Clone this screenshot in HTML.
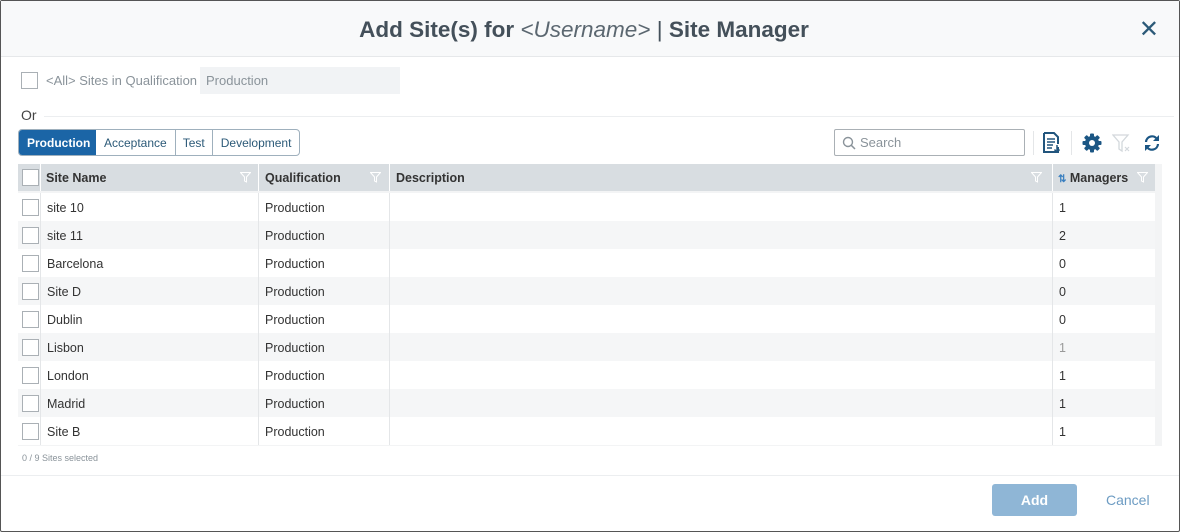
<!DOCTYPE html><html><head><style>
*{box-sizing:border-box;margin:0;padding:0}
body{width:1180px;height:532px;font-family:"Liberation Sans",sans-serif;background:#fff;position:relative;overflow:hidden;color:#333}
.frame{position:absolute;left:0;top:0;width:1180px;height:532px;border:1px solid #555;border-radius:2px}
.hdr{position:absolute;left:1px;top:1px;width:1178px;height:56px;background:#f8f9fa;border-bottom:1px solid #e6e8ea}
.title{position:absolute;left:-6px;width:100%;top:16px;text-align:center;font-size:22.5px;color:#44505a;font-weight:bold}
.title i{font-weight:normal;color:#5b6770}
.x{position:absolute;right:20px;top:14px;font-size:24px;color:#2c5a78}
.abs{position:absolute}
.cb{position:absolute;width:17px;height:17px;border:1px solid #aab0b5;background:#fff}
.row{position:absolute;left:18px;width:1137px;height:28px}
.row .c{position:absolute;top:0;height:28px;line-height:30px;font-size:12.5px;border-left:1px solid #e4e6e8;padding-left:6px}
.f{position:absolute;top:8px}
</style></head><body>
<div class="frame"></div>
<div class="hdr"><div class="title">Add Site(s) for <i>&lt;Username&gt;</i> <span style="font-weight:normal">|</span> Site Manager</div><div class="x">✕</div></div>
<div class="cb" style="left:21px;top:72px"></div>
<div class="abs" style="left:46px;top:73px;font-size:13px;color:#8a939a">&lt;All&gt; Sites in Qualification</div>
<div class="abs" style="left:200px;top:67px;width:200px;height:27px;background:#f1f3f5;font-size:13px;color:#8a939a;padding:6px 6px">Production</div>
<div class="abs" style="left:21px;top:107px;font-size:14px;color:#444">Or</div>
<div class="abs" style="left:44px;top:116px;width:1130px;height:1px;background:#eceef0"></div>
<div class="abs" style="left:18px;top:129px;height:27px;border:1px solid #9fb0bd;border-radius:4px;display:flex;font-size:12px;overflow:hidden">
<div style="background:#1b65a6;color:#fff;font-weight:bold;padding:6px 8px 0 8px;width:77px">Production</div>
<div style="color:#2c5a78;padding:6px 8px 0;border-right:1px solid #9fb0bd">Acceptance</div>
<div style="color:#2c5a78;padding:6px 7px 0;border-right:1px solid #9fb0bd">Test</div>
<div style="color:#2c5a78;padding:6px 8px 0">Development</div></div>
<div class="abs" style="left:834px;top:129px;width:191px;height:27px;border:1px solid #aab0b5;border-radius:2px;font-size:13px;color:#8a939a;padding:5px 0 0 25px">Search
<svg style="position:absolute;left:7px;top:6px" width="14" height="14" viewBox="0 0 14 14"><circle cx="6" cy="6" r="4.5" fill="none" stroke="#8a939a" stroke-width="1.4"/><path d="M9.3 9.3L13 13" stroke="#8a939a" stroke-width="1.5"/></svg></div>
<div class="abs" style="left:1033px;top:131px;width:1px;height:24px;background:#e4e6e8"></div>
<svg class="abs" style="left:1043px;top:132px" width="18" height="21" viewBox="0 0 18 21"><path d="M1 1h10l4 4v7M15 15v5H1V1" fill="none" stroke="#22557d" stroke-width="2"/><path d="M4 7h8M4 10h8M4 13h6M4 16h5" stroke="#22557d" stroke-width="1.5"/><path d="M14 13v7M11.5 17.5l2.5 3 2.5-3" stroke="#22557d" stroke-width="1.5" fill="none"/></svg>
<div class="abs" style="left:1071px;top:131px;width:1px;height:24px;background:#e4e6e8"></div>
<svg class="abs" style="left:1082px;top:133px" width="20" height="20" viewBox="0 0 20 20"><g fill="#1b5684"><circle cx="10" cy="10" r="7"/><rect x="8" y="0.5" width="4" height="19" rx="1"/><rect x="8" y="0.5" width="4" height="19" rx="1" transform="rotate(45 10 10)"/><rect x="8" y="0.5" width="4" height="19" rx="1" transform="rotate(90 10 10)"/><rect x="8" y="0.5" width="4" height="19" rx="1" transform="rotate(135 10 10)"/></g><circle cx="10" cy="10" r="3" fill="#fff"/></svg>
<svg class="abs" style="left:1112px;top:133px" width="20" height="20" viewBox="0 0 20 20"><path d="M1 2h15l-6 7v9l-3-2V9z" fill="none" stroke="#d3d8dc" stroke-width="1.3"/><path d="M13 14l4 4M17 14l-4 4" stroke="#d3d8dc" stroke-width="1.2"/></svg>
<svg class="abs" style="left:1143px;top:134px" width="18" height="18" viewBox="0 0 18 18"><path d="M3 8a6 6 0 0 1 11-3" fill="none" stroke="#1b5684" stroke-width="2.2"/><path d="M16 1v6h-6z" fill="#1b5684"/><path d="M15 10a6 6 0 0 1-11 3" fill="none" stroke="#1b5684" stroke-width="2.2"/><path d="M2 17v-6h6z" fill="#1b5684"/></svg>
<div class="abs" style="left:18px;top:164px;width:1144px;height:282px;background:#f3f4f5"></div>
<div class="abs" style="left:18px;top:164px;width:1137px;height:27px;background:#d8dde1;font-size:12.5px;font-weight:bold;color:#333">
<div class="cb" style="left:4px;top:5px"></div>
<div class="abs" style="left:22px;top:0;width:1px;height:27px;background:#fff"></div>
<div class="abs" style="left:28px;top:7px">Site Name</div>
<svg class="f" style="left:222px" width="11" height="11" viewBox="0 0 11 11"><path d="M0.5 0.5h10l-4 4.5v5l-2-1v-4z" fill="none" stroke="#fff" stroke-width="1"/></svg>
<div class="abs" style="left:240px;top:0;width:1px;height:27px;background:#fff"></div>
<div class="abs" style="left:247px;top:7px">Qualification</div>
<svg class="f" style="left:352px" width="11" height="11" viewBox="0 0 11 11"><path d="M0.5 0.5h10l-4 4.5v5l-2-1v-4z" fill="none" stroke="#fff" stroke-width="1"/></svg>
<div class="abs" style="left:371px;top:0;width:1px;height:27px;background:#fff"></div>
<div class="abs" style="left:378px;top:7px">Description</div>
<svg class="f" style="left:1013px" width="11" height="11" viewBox="0 0 11 11"><path d="M0.5 0.5h10l-4 4.5v5l-2-1v-4z" fill="none" stroke="#fff" stroke-width="1"/></svg>
<div class="abs" style="left:1034px;top:0;width:1px;height:27px;background:#fff"></div>
<div class="abs" style="left:1040px;top:7px"><span style="color:#3a7fbf;font-size:10px">⇅</span> Managers</div>
<svg class="f" style="left:1119px" width="11" height="11" viewBox="0 0 11 11"><path d="M0.5 0.5h10l-4 4.5v5l-2-1v-4z" fill="none" stroke="#fff" stroke-width="1"/></svg>
</div>
<div class="row" style="top:193px;background:#fff"><div class="cb" style="left:4px;top:6px"></div><div class="c" style="left:22px;width:218px">site 10</div><div class="c" style="left:240px;width:131px">Production</div><div class="c" style="left:371px;width:663px"></div><div class="c" style="left:1034px;width:103px">1</div></div>
<div class="row" style="top:221px;background:#f5f6f7"><div class="cb" style="left:4px;top:6px"></div><div class="c" style="left:22px;width:218px">site 11</div><div class="c" style="left:240px;width:131px">Production</div><div class="c" style="left:371px;width:663px"></div><div class="c" style="left:1034px;width:103px">2</div></div>
<div class="row" style="top:249px;background:#fff"><div class="cb" style="left:4px;top:6px"></div><div class="c" style="left:22px;width:218px">Barcelona</div><div class="c" style="left:240px;width:131px">Production</div><div class="c" style="left:371px;width:663px"></div><div class="c" style="left:1034px;width:103px">0</div></div>
<div class="row" style="top:277px;background:#f5f6f7"><div class="cb" style="left:4px;top:6px"></div><div class="c" style="left:22px;width:218px">Site D</div><div class="c" style="left:240px;width:131px">Production</div><div class="c" style="left:371px;width:663px"></div><div class="c" style="left:1034px;width:103px">0</div></div>
<div class="row" style="top:305px;background:#fff"><div class="cb" style="left:4px;top:6px"></div><div class="c" style="left:22px;width:218px">Dublin</div><div class="c" style="left:240px;width:131px">Production</div><div class="c" style="left:371px;width:663px"></div><div class="c" style="left:1034px;width:103px">0</div></div>
<div class="row" style="top:333px;background:#f5f6f7"><div class="cb" style="left:4px;top:6px"></div><div class="c" style="left:22px;width:218px">Lisbon</div><div class="c" style="left:240px;width:131px">Production</div><div class="c" style="left:371px;width:663px"></div><div class="c" style="left:1034px;width:103px;color:#999">1</div></div>
<div class="row" style="top:361px;background:#fff"><div class="cb" style="left:4px;top:6px"></div><div class="c" style="left:22px;width:218px">London</div><div class="c" style="left:240px;width:131px">Production</div><div class="c" style="left:371px;width:663px"></div><div class="c" style="left:1034px;width:103px">1</div></div>
<div class="row" style="top:389px;background:#f5f6f7"><div class="cb" style="left:4px;top:6px"></div><div class="c" style="left:22px;width:218px">Madrid</div><div class="c" style="left:240px;width:131px">Production</div><div class="c" style="left:371px;width:663px"></div><div class="c" style="left:1034px;width:103px">1</div></div>
<div class="row" style="top:417px;background:#fff"><div class="cb" style="left:4px;top:6px"></div><div class="c" style="left:22px;width:218px">Site B</div><div class="c" style="left:240px;width:131px">Production</div><div class="c" style="left:371px;width:663px"></div><div class="c" style="left:1034px;width:103px">1</div></div>
<div class="abs" style="left:22px;top:453px;font-size:9px;color:#8a939a">0 / 9 Sites selected</div>
<div class="abs" style="left:1px;top:475px;width:1178px;height:1px;background:#eceef0"></div>
<div class="abs" style="left:992px;top:484px;width:85px;height:32px;background:#8fb6d6;border-radius:3px;color:#fff;font-weight:bold;font-size:14px;text-align:center;line-height:32px">Add</div>
<div class="abs" style="left:1106px;top:492px;font-size:14px;color:#6d9cc3">Cancel</div>
</body></html>
